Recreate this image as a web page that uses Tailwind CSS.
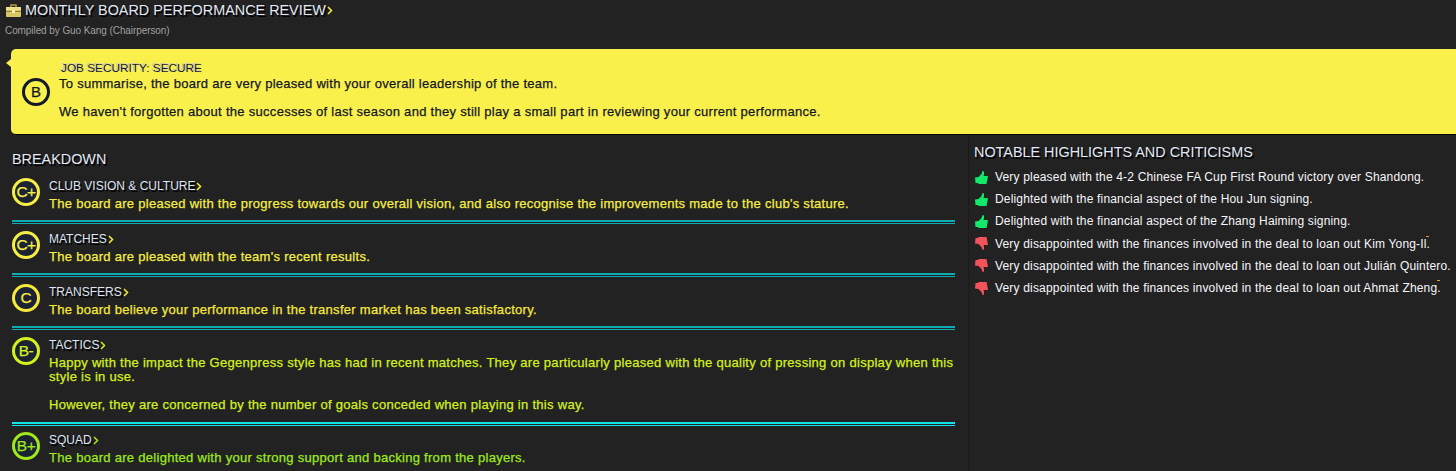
<!DOCTYPE html>
<html lang="en">
<head>
  <meta charset="UTF-8">
  <title>Monthly Board Performance Review</title>
  <script src="https://cdn.jsdelivr.net/npm/@tailwindcss/browser@4"></script>
</head>
<body class="bg-[#222222] font-['Liberation_Sans',Arial,sans-serif] overflow-hidden h-[471px]">
  <!-- header -->
  <div class="h-[49px] pl-[6px]">
    <div class="flex items-center h-[21px]">
      <svg width="15" height="13" viewBox="0 0 15 13" class="mr-[4px]">
        <path d="M5 3V1h5v2" fill="none" stroke="#b09a48" stroke-width="1.500"/>
        <rect x="0" y="3" width="15" height="10" rx="1" fill="#d9c763"/>
        <rect x="0" y="3" width="15" height="3" fill="#ece08a"/>
        <rect x="0" y="7" width="15" height="1" fill="#8f8138"/>
        <rect x="6" y="6" width="3" height="3" fill="#f6efb4"/>
      </svg>
      <span class="text-[14.4px] text-[#e3e8f5] [text-shadow:1.5px_1.5px_0_#000] leading-none">MONTHLY BOARD PERFORMANCE REVIEW</span>
      <svg width="6" height="9" viewBox="0 0 6 9" class="ml-[1px]"><path d="M1 1l3.500 3.500L1 8" fill="none" stroke="#f4e94a" stroke-width="1.500"/></svg>
    </div>
    <div class="-ml-[1px] mt-[4px] text-[10px] leading-[12px] tracking-[-0.08px] text-[#a0a0a0]">Compiled by Guo Kang (Chairperson)</div>
  </div>

  <!-- summary callout -->
  <div class="relative ml-[11px] h-[86px] bg-[#f9f04b] rounded-l-[5px] border-b border-black flex items-center">
    <div class="absolute left-[-5px] top-[10px] w-0 h-0 border-y-[4px] border-y-transparent border-r-[5px] border-r-[#f9f04b]"></div>
    <div class="w-[28px] h-[28px] ml-[11px] mt-[1px] shrink-0 rounded-full border-[3px] border-[#14182b] flex items-center justify-center text-[15px] text-[#14182b] [-webkit-text-stroke:0.25px_#14182b]">B</div>
    <div class="ml-[9px] h-full">
      <div class="pt-[12px] pl-[2px] text-[11.800px] leading-[14px] text-[#14182b] [text-shadow:-2px_-1px_0_#c9c9c4]">JOB SECURITY: SECURE</div>
      <p class="mt-[2px] text-[13px] leading-[14px] tracking-[0.27px] text-[#14182b] [-webkit-text-stroke:0.25px_#14182b]">To summarise, the board are very pleased with your overall leadership of the team.</p>
      <p class="mt-[14px] text-[13px] leading-[14px] tracking-[0.29px] text-[#14182b] [-webkit-text-stroke:0.25px_#14182b]">We haven't forgotten about the successes of last season and they still play a small part in reviewing your current performance.</p>
    </div>
  </div>

  <div class="flex h-[336px]">
    <!-- breakdown -->
    <div class="w-[969px] pl-[12px] pr-[13px] border-r border-[#1b1b1b]">
      <h2 class="pt-[16px] pb-[1px] text-[14.400px] leading-[16px] font-normal text-[#e3e8f5] [text-shadow:1.5px_1.5px_0_#000]">BREAKDOWN</h2>

      <div class="flex mt-[10px] h-[42px]">
        <div class="w-[28px] h-[28px] shrink-0 rounded-full border-[3px] border-[#f6ee45] bg-[#1b2233] flex items-center justify-center text-[15.500px] tracking-[-0.5px] text-[#f6ee45] [-webkit-text-stroke:0.25px_#f6ee45]">C+</div>
        <div class="ml-[9px]">
          <div class="flex items-center h-[16px] text-[12px] text-[#dfe4f0] [text-shadow:1.5px_1.5px_0_#000]">CLUB VISION &amp; CULTURE<svg width="6" height="9" viewBox="0 0 6 9" class="ml-[1px]"><path d="M1 1l3.500 3.500L1 8" fill="none" stroke="#f6ee45" stroke-width="1.500"/></svg></div>
          <p class="mt-[3px] text-[13px] leading-[14px] tracking-[0.285px] text-[#f6ee45] [-webkit-text-stroke:0.25px_#f6ee45]">The board are pleased with the progress towards our overall vision, and also recognise the improvements made to the club's stature.</p>
        </div>
      </div>
      <div class="mb-[7px] h-[4px] border-t-2 border-b border-[#10aab2]"></div>

      <div class="flex h-[42px]">
        <div class="w-[28px] h-[28px] shrink-0 rounded-full border-[3px] border-[#f6ee45] bg-[#1b2233] flex items-center justify-center text-[15.500px] tracking-[-0.5px] text-[#f6ee45] [-webkit-text-stroke:0.25px_#f6ee45]">C+</div>
        <div class="ml-[9px]">
          <div class="flex items-center h-[16px] text-[12px] text-[#dfe4f0] [text-shadow:1.5px_1.5px_0_#000]">MATCHES<svg width="6" height="9" viewBox="0 0 6 9" class="ml-[1px]"><path d="M1 1l3.500 3.500L1 8" fill="none" stroke="#f6ee45" stroke-width="1.500"/></svg></div>
          <p class="mt-[3px] text-[13px] leading-[14px] tracking-[0.285px] text-[#f6ee45] [-webkit-text-stroke:0.25px_#f6ee45]">The board are pleased with the team's recent results.</p>
        </div>
      </div>
      <div class="mb-[7px] h-[4px] border-t-2 border-b border-[#10aab2]"></div>

      <div class="flex h-[42px]">
        <div class="w-[28px] h-[28px] shrink-0 rounded-full border-[3px] border-[#f6e83c] bg-[#1b2233] flex items-center justify-center text-[15.500px] text-[#f6e83c] [-webkit-text-stroke:0.25px_#f6e83c]">C</div>
        <div class="ml-[9px]">
          <div class="flex items-center h-[16px] text-[12px] text-[#dfe4f0] [text-shadow:1.5px_1.5px_0_#000]">TRANSFERS<svg width="6" height="9" viewBox="0 0 6 9" class="ml-[1px]"><path d="M1 1l3.500 3.500L1 8" fill="none" stroke="#f6e83c" stroke-width="1.500"/></svg></div>
          <p class="mt-[3px] text-[13px] leading-[14px] tracking-[0.285px] text-[#f6e83c] [-webkit-text-stroke:0.25px_#f6e83c]">The board believe your performance in the transfer market has been satisfactory.</p>
        </div>
      </div>
      <div class="mb-[7px] h-[4px] border-t-2 border-b border-[#10aab2]"></div>

      <div class="flex h-[85px]">
        <div class="w-[28px] h-[28px] shrink-0 rounded-full border-[3px] border-[#d4f01e] bg-[#1b2233] flex items-center justify-center text-[15.500px] tracking-[-0.5px] text-[#d4f01e] [-webkit-text-stroke:0.25px_#d4f01e]">B-</div>
        <div class="ml-[9px]">
          <div class="flex items-center h-[16px] text-[12px] text-[#dfe4f0] [text-shadow:1.5px_1.5px_0_#000]">TACTICS<svg width="6" height="9" viewBox="0 0 6 9" class="ml-[1px]"><path d="M1 1l3.500 3.500L1 8" fill="none" stroke="#d4f01e" stroke-width="1.500"/></svg></div>
          <p class="mt-[3px] text-[13px] leading-[14px] tracking-[0.285px] text-[#d4f01e] [-webkit-text-stroke:0.25px_#d4f01e]">Happy with the impact the Gegenpress style has had in recent matches. They are particularly pleased with the quality of pressing on display when this style is in use.</p>
          <p class="mt-[14px] text-[13px] leading-[14px] tracking-[0.285px] text-[#d4f01e] [-webkit-text-stroke:0.25px_#d4f01e]">However, they are concerned by the number of goals conceded when playing in this way.</p>
        </div>
      </div>
      <div class="mb-[6px] h-[4px] border-t-2 border-b border-[#10e4ea]"></div>

      <div class="flex h-[42px]">
        <div class="w-[28px] h-[28px] shrink-0 rounded-full border-[3px] border-[#9fe81c] bg-[#1b2233] flex items-center justify-center text-[15.500px] tracking-[-0.5px] text-[#9fe81c] [-webkit-text-stroke:0.25px_#9fe81c]">B+</div>
        <div class="ml-[9px]">
          <div class="flex items-center h-[16px] text-[12px] text-[#dfe4f0] [text-shadow:1.5px_1.5px_0_#000]">SQUAD<svg width="6" height="9" viewBox="0 0 6 9" class="ml-[1px]"><path d="M1 1l3.500 3.500L1 8" fill="none" stroke="#9fe81c" stroke-width="1.500"/></svg></div>
          <p class="mt-[3px] text-[13px] leading-[14px] tracking-[0.285px] text-[#9fe81c] [-webkit-text-stroke:0.25px_#9fe81c]">The board are delighted with your strong support and backing from the players.</p>
        </div>
      </div>
    </div>

    <!-- highlights -->
    <div class="flex-1 pl-[5px]">
      <h2 class="pt-[9px] text-[14.400px] leading-[16px] font-normal text-[#e3e8f5] [text-shadow:1.5px_1.5px_0_#000]">NOTABLE HIGHLIGHTS AND CRITICISMS</h2>
      <ul class="mt-[6px] text-[12px] tracking-[0.175px] text-[#f6f6fa] whitespace-nowrap">
        <li class="flex items-center h-[22.200px]"><svg width="13" height="13" viewBox="0 0 13 13" class="ml-[1px] mr-[7px]"><path d="M0 6.500l3.500-.5L6.500 3 7.500 0l1.500.5v3L8.500 5H13l-.5 3-1 5H4l-1.500-1H.5z" fill="#12e86a"/></svg>Very pleased with the 4-2 Chinese FA Cup First Round victory over Shandong.</li>
        <li class="flex items-center h-[22.200px]"><svg width="13" height="13" viewBox="0 0 13 13" class="ml-[1px] mr-[7px]"><path d="M0 6.500l3.500-.5L6.500 3 7.500 0l1.500.5v3L8.500 5H13l-.5 3-1 5H4l-1.500-1H.5z" fill="#12e86a"/></svg>Delighted with the financial aspect of the Hou Jun signing.</li>
        <li class="flex items-center h-[22.200px]"><svg width="13" height="13" viewBox="0 0 13 13" class="ml-[1px] mr-[7px]"><path d="M0 6.500l3.500-.5L6.500 3 7.500 0l1.500.5v3L8.500 5H13l-.5 3-1 5H4l-1.500-1H.5z" fill="#12e86a"/></svg>Delighted with the financial aspect of the Zhang Haiming signing.</li>
        <li class="flex items-center h-[22.200px]"><svg width="13" height="13" viewBox="0 0 13 13" class="ml-[1px] mr-[7px]"><path d="M0 6.500l3.500.5L6.500 10l1 3 1.500-.5v-3L8.500 8H13l-.5-3-1-5H4L2.500 1H.5z" fill="#f2525a"/></svg><span class="relative">Very disappointed with the finances involved in the deal to loan out Kim Yong-Il.<span class="absolute right-[1px] top-[1px] w-[3px] h-[1px] bg-[#e8a020]"></span></span></li>
        <li class="flex items-center h-[22.200px]"><svg width="13" height="13" viewBox="0 0 13 13" class="ml-[1px] mr-[7px]"><path d="M0 6.500l3.500.5L6.500 10l1 3 1.500-.5v-3L8.500 8H13l-.5-3-1-5H4L2.500 1H.5z" fill="#f2525a"/></svg>Very disappointed with the finances involved in the deal to loan out Julián Quintero.</li>
        <li class="flex items-center h-[22.200px]"><svg width="13" height="13" viewBox="0 0 13 13" class="ml-[1px] mr-[7px]"><path d="M0 6.500l3.500.5L6.500 10l1 3 1.500-.5v-3L8.500 8H13l-.5-3-1-5H4L2.500 1H.5z" fill="#f2525a"/></svg><span class="relative">Very disappointed with the finances involved in the deal to loan out Ahmat Zheng.<span class="absolute right-[1px] top-[1px] w-[3px] h-[1px] bg-[#e8a020]"></span></span></li>
      </ul>
    </div>
  </div>
</body>
</html>
